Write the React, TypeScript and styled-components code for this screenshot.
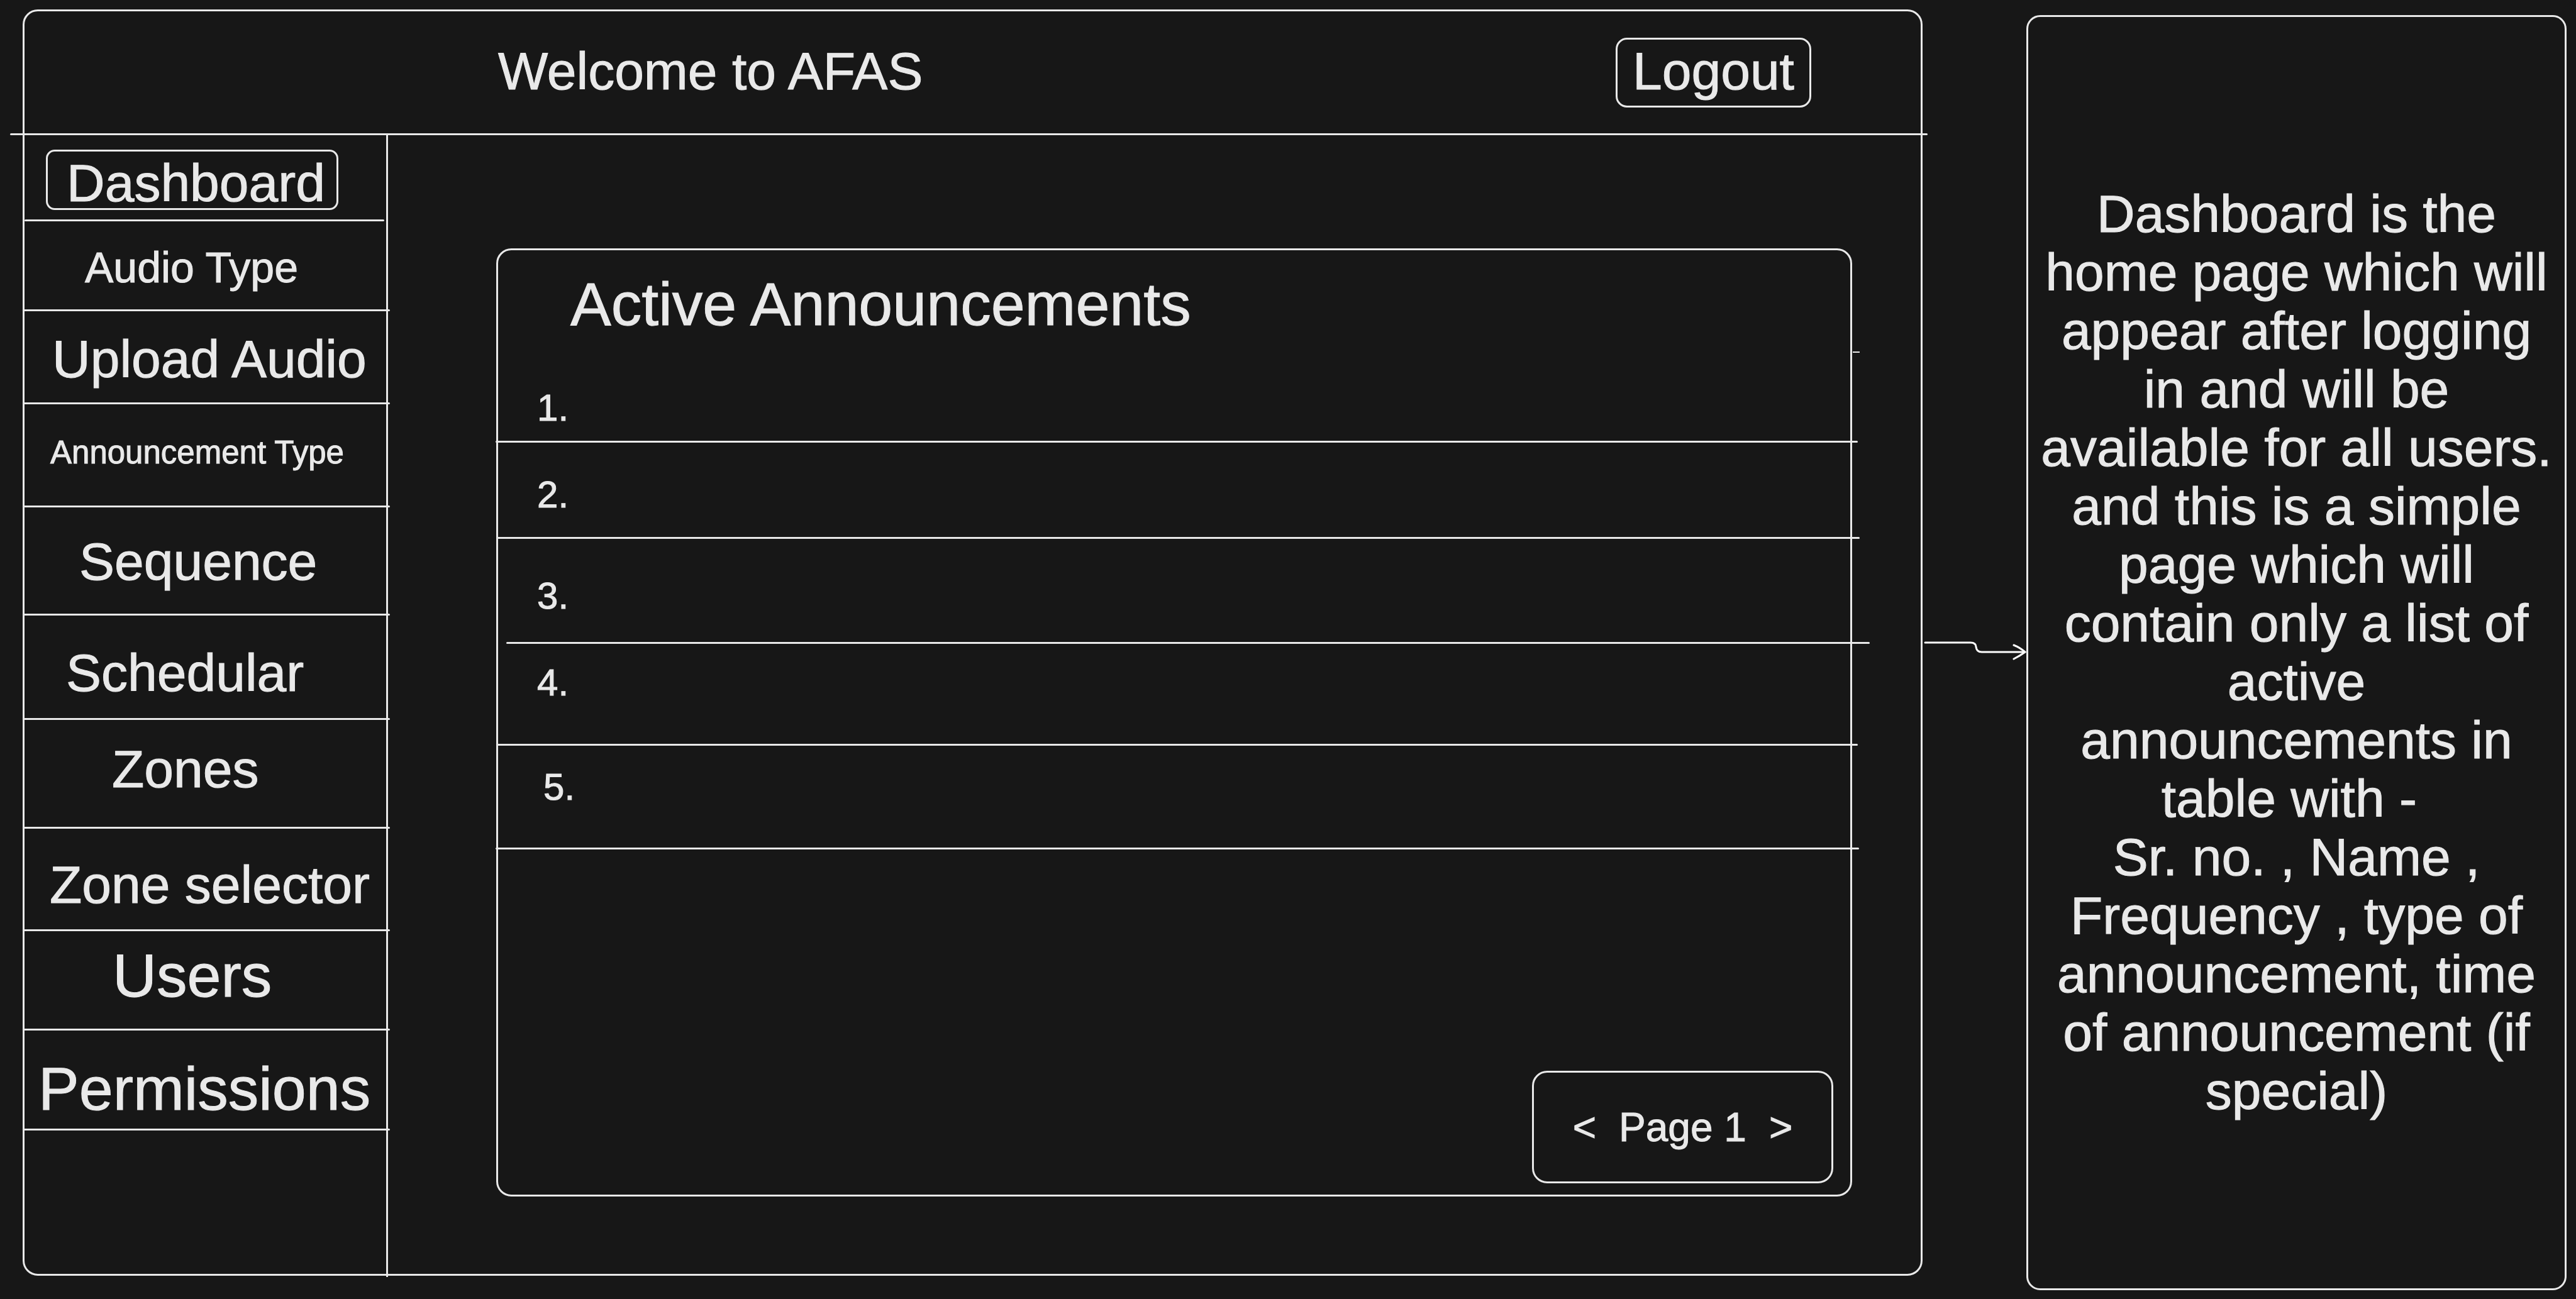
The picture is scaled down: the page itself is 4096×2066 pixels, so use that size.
import React from "react";
import styled, { createGlobalStyle } from "styled-components";

const ink = "#e9e9e9";
const paper = "#171717";

const GlobalStyle = createGlobalStyle`
  *, *::before, *::after { box-sizing: border-box; }
  body {
    margin: 0;
    background: ${paper};
    color: ${ink};
    font-family: "Liberation Sans", Arial, sans-serif;
    -webkit-text-stroke: 1px ${ink};
    stroke-linejoin: round;
  }
`;

type TextSize = "xs" | "sm" | "md" | "lg";

const sizes: Record<TextSize, string> = {
  xs: "font-size: 51px; line-height: 62px;",
  sm: "font-size: 68px; line-height: 80px;",
  md: "font-size: 84px; line-height: 100px;",
  lg: "font-size: 97px; line-height: 116px;",
};

const Page = styled.div`
  display: flex;
  min-height: 100vh;
  padding-right: 15px;
`;

const Frame = styled.div`
  flex: 1;
  display: flex;
  flex-direction: column;
  margin: 15px 0 37px 36px;
  border: 3px solid ${ink};
  border-radius: 24px;
`;

const Rule = styled.div<{ $left?: number; $right?: number }>`
  height: 3px;
  border-radius: 2px;
  background: ${ink};
  margin-left: ${(p) => p.$left ?? 0}px;
  margin-right: ${(p) => p.$right ?? 0}px;
`;

const Header = styled.header`
  display: flex;
  align-items: center;
  justify-content: space-between;
  height: 194px;
  padding: 0 174px 0 753px;
`;

const Title = styled.h1`
  margin: 0;
  padding-bottom: 4px;
  font-weight: 400;
  ${sizes.md}
`;

const LogoutButton = styled.button`
  width: 311px;
  height: 111px;
  padding: 0 0 5px;
  border: 3px solid ${ink};
  border-radius: 18px;
  background: none;
  color: inherit;
  font-family: inherit;
  font-size: 84px;
  line-height: 96px;
`;

const Body = styled.div`
  flex: 1;
  display: flex;
`;

const Sidebar = styled.nav`
  width: 578px;
  margin-bottom: -5px;
  border-right: 3px solid ${ink};
`;

const NavList = styled.ul`
  margin: 0;
  padding: 0;
  list-style: none;
`;

const NavItem = styled.li<{ $height: number }>`
  display: flex;
  flex-direction: column;
  justify-content: space-between;
  height: ${(p) => p.$height}px;
`;

const NavLink = styled.a<{ $size: TextSize; $top: number; $indent: number }>`
  padding: ${(p) => p.$top}px 0 0 ${(p) => p.$indent}px;
  color: inherit;
  text-decoration: none;
  white-space: nowrap;
  ${(p) => sizes[p.$size]}
`;

const ActiveLink = styled.a`
  width: 465px;
  margin: 23px 0 0 34px;
  padding: 10px 28px 0 30px;
  border: 3px solid ${ink};
  border-radius: 14px;
  color: inherit;
  text-decoration: none;
  font-size: 84px;
  line-height: 80px;
`;

const Main = styled.main`
  flex: 1;
  display: flex;
  padding: 180px 109px 123px 172px;
`;

const Card = styled.section`
  position: relative;
  flex: 1;
  display: flex;
  flex-direction: column;
  border: 3px solid ${ink};
  border-radius: 24px;
`;

const EdgeTick = styled.span`
  position: absolute;
  top: 161px;
  right: -15px;
  width: 11px;
  height: 2px;
  background: ${ink};
`;

const CardTitle = styled.h2`
  margin: 0;
  padding: 28px 0 0 115px;
  font-weight: 400;
  ${sizes.lg}
`;

const List = styled.ol`
  margin: 0;
  padding: 0;
  list-style: none;
`;

const Row = styled.li<{ $height: number }>`
  display: flex;
  flex-direction: column;
  justify-content: space-between;
  height: ${(p) => p.$height}px;
`;

const RowNumber = styled.span<{ $top: number; $indent: number }>`
  padding: ${(p) => p.$top}px 0 0 ${(p) => p.$indent}px;
  font-size: 60px;
  line-height: 72px;
`;

const Pager = styled.div`
  display: flex;
  align-items: center;
  justify-content: center;
  gap: 36px;
  width: 479px;
  height: 179px;
  margin: auto 27px 18px auto;
  border: 3px solid ${ink};
  border-radius: 24px;
  font-size: 64px;
  line-height: 76px;
`;

const PagerButton = styled.button`
  padding: 0;
  border: 0;
  background: none;
  color: inherit;
  font: inherit;
`;

const Arrow = styled.svg`
  flex: none;
  align-self: center;
  width: 165px;
  height: 34px;
  fill: none;
  stroke: #ffffff;
  stroke-width: 3;
  stroke-linecap: round;
  stroke-linejoin: round;
`;

const Note = styled.aside`
  display: flex;
  flex-direction: column;
  justify-content: center;
  width: 859px;
  margin: 24px 0 14px;
  border: 3px solid ${ink};
  border-radius: 22px;
  text-align: center;
`;

const NoteText = styled.p`
  margin: 0;
  font-size: 84px;
  line-height: 93px;
  white-space: pre-line;
`;

interface NavEntry {
  label: string;
  size: TextSize;
  height: number;
  top: number;
  indent: number;
}

const navEntries: NavEntry[] = [
  { label: "Audio Type", size: "sm", height: 143, top: 33, indent: 96 },
  { label: "Upload Audio", size: "md", height: 148, top: 26, indent: 44 },
  { label: "Announcement Type", size: "xs", height: 164, top: 46, indent: 41 },
  { label: "Sequence", size: "md", height: 172, top: 36, indent: 87 },
  { label: "Schedular", size: "md", height: 166, top: 41, indent: 66 },
  { label: "Zones", size: "md", height: 173, top: 28, indent: 139 },
  { label: "Zone selector", size: "md", height: 163, top: 39, indent: 40 },
  { label: "Users", size: "lg", height: 158, top: 13, indent: 140 },
  { label: "Permissions", size: "lg", height: 159, top: 35, indent: 22 },
];

const rows = [
  { height: 162, top: 71, indent: 62, left: -4, right: -12 },
  { height: 153, top: 47, indent: 62, left: -2, right: -15 },
  { height: 167, top: 55, indent: 62, left: 13, right: -31 },
  { height: 162, top: 26, indent: 62, left: -3, right: -12 },
  { height: 165, top: 30, indent: 72, left: -4, right: -14 },
];

// The non-breaking space keeps the "table with -" line centred with its trailing gap.
const noteLines = [
  "Dashboard is the",
  "home page which will",
  "appear after logging",
  "in and will be",
  "available for all users.",
  "and this is a simple",
  "page which will",
  "contain only a list of",
  "active",
  "announcements in",
  "table with -\u00a0",
  "Sr. no. , Name ,",
  "Frequency , type of",
  "announcement, time",
  "of announcement (if",
  "special)",
];

export default function App() {
  return (
    <>
      <GlobalStyle />
      <Page>
        <Frame>
          <Header>
            <Title>Welcome to AFAS</Title>
            <LogoutButton type="button">Logout</LogoutButton>
          </Header>
          <Rule $left={-23} $right={-11} />
          <Body>
            <Sidebar aria-label="Main">
              <NavList>
                <NavItem $height={137}>
                  <ActiveLink href="#dashboard" aria-current="page">
                    Dashboard
                  </ActiveLink>
                  <Rule $right={3} />
                </NavItem>
                {navEntries.map((entry) => (
                  <NavItem key={entry.label} $height={entry.height}>
                    <NavLink
                      href={"#" + entry.label.toLowerCase().replace(" ", "-")}
                      $size={entry.size}
                      $top={entry.top}
                      $indent={entry.indent}
                    >
                      {entry.label}
                    </NavLink>
                    <Rule $left={-3} $right={-6} />
                  </NavItem>
                ))}
              </NavList>
            </Sidebar>
            <Main>
              <Card>
                <EdgeTick />
                <CardTitle>Active Announcements</CardTitle>
                <List>
                  {rows.map((row, i) => (
                    <Row key={i} $height={row.height}>
                      <RowNumber $top={row.top} $indent={row.indent}>
                        {i + 1}.
                      </RowNumber>
                      <Rule $left={row.left} $right={row.right} />
                    </Row>
                  ))}
                </List>
                <Pager>
                  <PagerButton type="button" aria-label="Previous page">
                    &lt;
                  </PagerButton>
                  <span>Page 1</span>
                  <PagerButton type="button" aria-label="Next page">
                    &gt;
                  </PagerButton>
                </Pager>
              </Card>
            </Main>
          </Body>
        </Frame>
        <Arrow viewBox="0 0 165 34" aria-hidden="true">
          <path d="M4 6H76Q85 6 85 13Q86 21 94 21H163" />
          <path d="M145 10Q155 14 163 21Q155 27 145 32" />
        </Arrow>
        <Note>
          <NoteText>{noteLines.join("\n")}</NoteText>
        </Note>
      </Page>
    </>
  );
}
